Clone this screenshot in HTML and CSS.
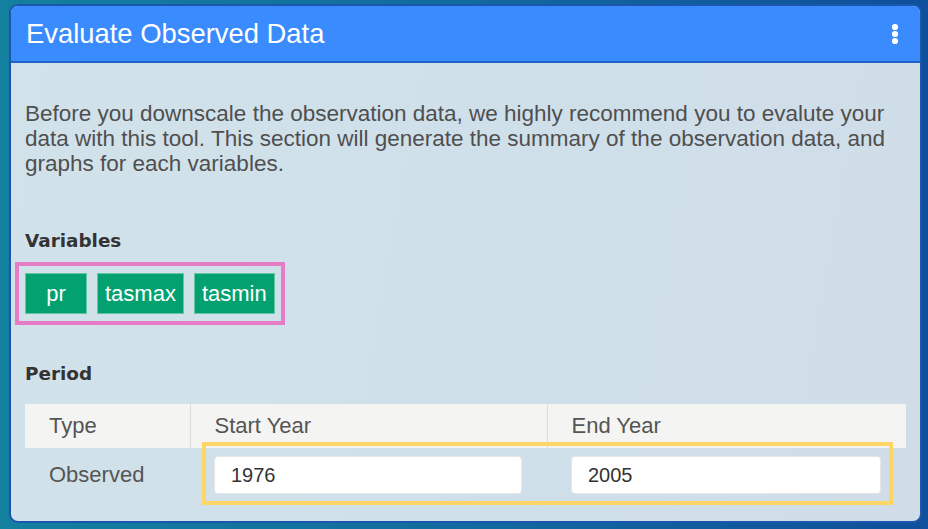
FILE: index.html
```html
<!DOCTYPE html>
<html lang="en">
<head>
<meta charset="utf-8">
<title>Evaluate Observed Data</title>
<link rel="stylesheet" href="styles.css">
</head>
<body>
<div class="page">
  <section class="card">
    <header class="card-header">
      <h1 class="card-title">Evaluate Observed Data</h1>
      <button class="kebab" aria-label="More options">
        <svg width="8" height="22" viewBox="0 0 8 22"><circle cx="4" cy="4" r="3.1" fill="#fff"/><circle cx="4" cy="11" r="3.1" fill="#fff"/><circle cx="4" cy="18" r="3.1" fill="#fff"/></svg>
      </button>
    </header>
    <div class="card-body">
      <p class="intro">Before you downscale the observation data, we highly recommend you to evalute your data with this tool. This section will generate the summary of the observation data, and graphs for each variables.</p>

      <h2 class="label variables-label">Variables</h2>
      <div class="chip-box">
        <span class="chip chip-wide">pr</span>
        <span class="chip">tasmax</span>
        <span class="chip">tasmin</span>
      </div>

      <h2 class="label period-label">Period</h2>
      <div class="table-wrap">
        <table class="period-table">
          <colgroup>
            <col class="col-type">
            <col class="col-start">
            <col class="col-end">
          </colgroup>
          <thead>
            <tr>
              <th>Type</th>
              <th>Start Year</th>
              <th>End Year</th>
            </tr>
          </thead>
          <tbody>
            <tr>
              <td>Observed</td>
              <td class="input-cell"><input class="year-input" type="text" value="1976"></td>
              <td class="input-cell"><input class="year-input" type="text" value="2005"></td>
            </tr>
          </tbody>
        </table>
        <div class="highlight-yellow"></div>
      </div>
    </div>
  </section>
</div>
</body>
</html>
```

FILE: styles.css
```css
* { box-sizing: border-box; }

html, body {
  margin: 0;
  padding: 0;
  width: 928px;
  height: 529px;
  overflow: hidden;
}

body {
  font-family: "Liberation Sans", Arial, sans-serif;
  background: linear-gradient(90deg, #13809f 0%, #126d9f 45%, #0f4f9b 100%);
}

.page {
  padding: 4px 6px 6px 9px;
  height: 529px;
}

.card {
  height: 100%;
  border: 2px solid #1b56ae;
  border-radius: 9px;
  overflow: hidden;
  display: flex;
  flex-direction: column;
  background: linear-gradient(100deg, #d2e2ea 0%, #cfe0ea 50%, #d0dde8 100%);
}

.card-header {
  height: 57px;
  flex: none;
  background: #3a8bfd;
  border-bottom: 2px solid #1f63c6;
  display: flex;
  align-items: center;
  justify-content: space-between;
  padding: 0 21px 0 15px;
}

.card-title {
  margin: 0;
  font-weight: normal;
  font-size: 27.4px;
  color: #fff;
  line-height: 1;
}

.kebab {
  border: 0;
  background: none;
  padding: 0;
  display: flex;
  margin-top: 0;
}

.card-body {
  padding: 38px 14px 0 14px;
}

.intro {
  margin: 0;
  font-size: 22.5px;
  line-height: 25px;
  color: #4f4f4f;
}

.label {
  margin: 0;
  font-family: "DejaVu Sans", Verdana, sans-serif;
  font-weight: bold;
  font-size: 18.4px;
  line-height: 22px;
  color: #333;
}

.variables-label { margin-top: 54px; }

.chip-box {
  display: inline-flex;
  gap: 10px;
  margin: 10px 0 0 -10px;
  padding: 7px 6px;
  border: 4px solid #e77cc6;
}

.chip {
  height: 41px;
  padding: 0 7px;
  background: #03a16f;
  border: 1px solid #62c7a2;
  color: #fff;
  font-size: 22px;
  line-height: 39px;
  text-align: center;
}

.chip-wide { min-width: 62px; }

.period-label { margin-top: 38px; }

.table-wrap {
  position: relative;
  margin-top: 19px;
}

.period-table {
  width: 881px;
  border-collapse: collapse;
  table-layout: fixed;
  font-size: 22px;
  color: #555;
}

.col-type { width: 165px; }
.col-start { width: 357px; }
.col-end { width: 359px; }

.period-table th {
  height: 44px;
  padding: 0 0 0 24px;
  background: #f4f4f2;
  font-weight: normal;
  text-align: left;
  border-left: 1px solid #dcdcdc;
}

.period-table th:first-child { border-left: 0; }

.period-table td {
  height: 54px;
  padding: 0 0 0 24px;
}

.period-table td.input-cell {
  padding: 8px 25px 8px 24px;
}

.year-input {
  display: block;
  width: 100%;
  height: 38px;
  border: 1px solid #e6e6e6;
  border-radius: 4px;
  background: #fff;
  padding: 0 16px;
  font-family: "Liberation Sans", Arial, sans-serif;
  font-size: 20px;
  color: #333;
}

.highlight-yellow {
  position: absolute;
  left: 177px;
  top: 38px;
  width: 691px;
  height: 63px;
  border: 4px solid #fdd665;
  pointer-events: none;
}
```
